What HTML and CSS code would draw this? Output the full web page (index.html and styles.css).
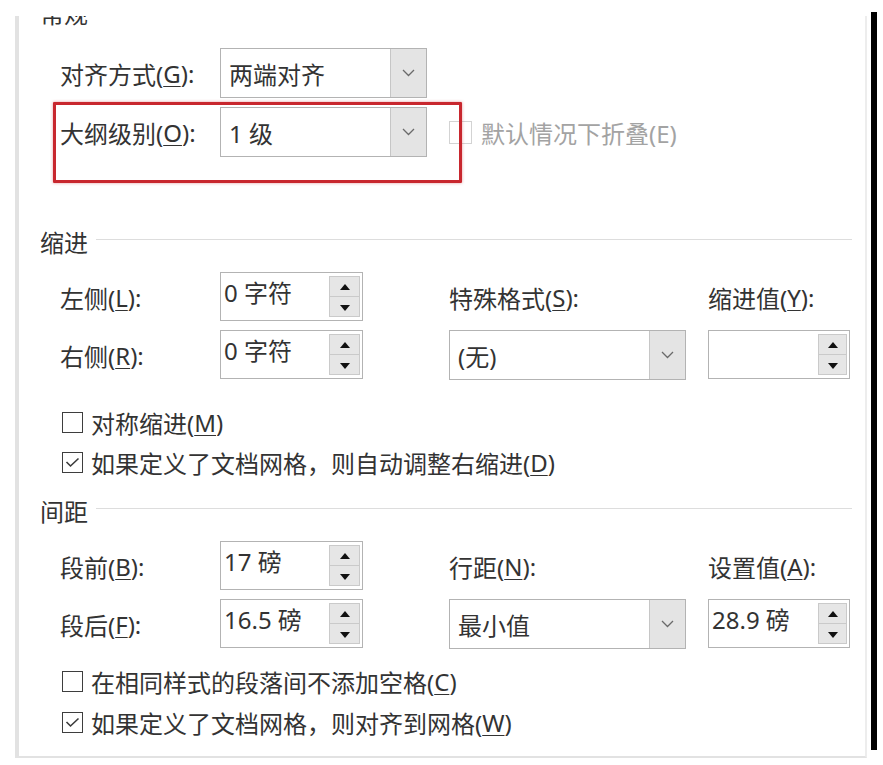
FILE: index.html
```html
<!DOCTYPE html>
<html lang="zh-CN">
<head>
  <meta charset="UTF-8">
  <title>段落 - 缩进和间距</title>
  <link rel="stylesheet" href="styles.css">
</head>
<body>

<div class="screen">
  <div class="panel">
    <div class="highlight-box"></div>

    <div class="group-title cut">常规</div>
    <div class="general">
      <div class="row">
        <span class="label">对齐方式(<u>G</u>):</span>
        <div class="select wide">
          <span class="value">两端对齐</span>
          <span class="arrow"><svg width="13" height="8" viewBox="0 0 13 8"><polyline points="1,1 6.5,6.5 12,1" fill="none" stroke="#6a6a6a" stroke-width="1.3"/></svg></span>
        </div>
      </div>
      <div class="row">
        <span class="label">大纲级别(<u>O</u>):</span>
        <div class="select wide">
          <span class="value">1 级</span>
          <span class="arrow"><svg width="13" height="8" viewBox="0 0 13 8"><polyline points="1,1 6.5,6.5 12,1" fill="none" stroke="#6a6a6a" stroke-width="1.3"/></svg></span>
        </div>
        <div class="check disabled"><span class="box"></span>默认情况下折叠(E)</div>
      </div>
    </div>

    <div class="group-title indent-title">缩进</div>
    <div class="fields">
      <span class="label">左侧(<u>L</u>):</span>
      <div class="spin">
        <span class="value">0 字符</span>
        <span class="buttons"><span class="up"></span><span class="down"></span></span>
      </div>
      <span class="label">特殊格式(<u>S</u>):</span>
      <span class="label">缩进值(<u>Y</u>):</span>

      <span class="label">右侧(<u>R</u>):</span>
      <div class="spin">
        <span class="value">0 字符</span>
        <span class="buttons"><span class="up"></span><span class="down"></span></span>
      </div>
      <div class="select mid">
        <span class="value">(无)</span>
        <span class="arrow"><svg width="13" height="8" viewBox="0 0 13 8"><polyline points="1,1 6.5,6.5 12,1" fill="none" stroke="#6a6a6a" stroke-width="1.3"/></svg></span>
      </div>
      <div class="spin narrow">
        <span class="value"></span>
        <span class="buttons"><span class="up"></span><span class="down"></span></span>
      </div>
    </div>

    <div class="options first">
      <div class="check"><span class="box"></span>对称缩进(<u>M</u>)</div>
      <div class="check"><span class="box checked"><svg width="15" height="11" viewBox="0 0 15 11"><polyline points="1.5,5 5.5,9 13.5,1.5" fill="none" stroke="#3a3a3a" stroke-width="1.6"/></svg></span>如果定义了文档网格，则自动调整右缩进(<u>D</u>)</div>
    </div>

    <div class="group-title spacing-title">间距</div>
    <div class="fields">
      <span class="label">段前(<u>B</u>):</span>
      <div class="spin">
        <span class="value">17 磅</span>
        <span class="buttons"><span class="up"></span><span class="down"></span></span>
      </div>
      <span class="label">行距(<u>N</u>):</span>
      <span class="label">设置值(<u>A</u>):</span>

      <span class="label">段后(<u>F</u>):</span>
      <div class="spin">
        <span class="value">16.5 磅</span>
        <span class="buttons"><span class="up"></span><span class="down"></span></span>
      </div>
      <div class="select mid">
        <span class="value">最小值</span>
        <span class="arrow"><svg width="13" height="8" viewBox="0 0 13 8"><polyline points="1,1 6.5,6.5 12,1" fill="none" stroke="#6a6a6a" stroke-width="1.3"/></svg></span>
      </div>
      <div class="spin narrow">
        <span class="value">28.9 磅</span>
        <span class="buttons"><span class="up"></span><span class="down"></span></span>
      </div>
    </div>

    <div class="options last">
      <div class="check"><span class="box"></span>在相同样式的段落间不添加空格(<u>C</u>)</div>
      <div class="check"><span class="box checked"><svg width="15" height="11" viewBox="0 0 15 11"><polyline points="1.5,5 5.5,9 13.5,1.5" fill="none" stroke="#3a3a3a" stroke-width="1.6"/></svg></span>如果定义了文档网格，则对齐到网格(<u>W</u>)</div>
    </div>
  </div>
  <div class="edge"></div>
</div>

</body>
</html>
```

FILE: styles.css
```css
body {
  margin: 0;
  background: #ffffff;
  color: #333;
  font-family: 'Noto Sans', 'Noto Sans CJK SC', sans-serif;
  font-size: 24px;
  overflow: hidden;
}
.screen {
  display: flex;
  align-items: flex-start;
  padding-left: 15px;
}
.panel {
  position: relative;
  box-sizing: border-box;
  width: 852px;
  height: 742px;
  margin-top: 16px;
  padding: 0 13px 0 21px;
  border-left: 4px solid #e2e2e2;
  border-right: 2px solid #ededed;
  border-bottom: 2px solid #e2e2e2;
  overflow: hidden;
  background: #fff;
}
.edge {
  width: 6px;
  height: 738px;
  margin-top: 12px;
  margin-left: 4px;
  background: #000;
}
.highlight-box {
  position: absolute;
  left: 34px;
  top: 86px;
  width: 409px;
  height: 81px;
  box-sizing: border-box;
  border: 3px solid #c8272e;
  border-radius: 1px;
  box-shadow: 0 0 3px rgba(200, 39, 46, 0.5);
}
u {
  text-decoration-thickness: 1px;
  text-underline-offset: 3px;
}
.group-title {
  display: flex;
  align-items: center;
  height: 30px;
  line-height: 30px;
  gap: 8px;
}
.group-title::after {
  content: '';
  flex: 1;
  border-top: 1px solid #dddddd;
  margin-top: -8px;
}
.group-title.cut::after {
  display: none;
}
.cut {
  margin-top: -17px;
}
.indent-title {
  margin-top: 71px;
}
.spacing-title {
  margin-top: 15px;
}
.general {
  margin-top: 19px;
  padding-left: 20px;
  display: flex;
  flex-direction: column;
  gap: 9px;
}
.row {
  display: flex;
  align-items: center;
  height: 50px;
}
.row .label {
  width: 160px;
}
.label {
  display: flex;
  align-items: center;
  white-space: nowrap;
}
.select {
  box-sizing: border-box;
  height: 50px;
  display: flex;
  border: 1px solid #b3b3b3;
  background: #fff;
}
.select .value {
  flex: 1;
  display: flex;
  align-items: center;
  padding-left: 8px;
}
.select .arrow {
  width: 35px;
  display: flex;
  align-items: center;
  justify-content: center;
  background: #e4e4e4;
  border-left: 1px solid #c6c6c6;
}
.select.wide {
  width: 207px;
}
.select.mid {
  width: 237px;
}
.fields {
  margin-top: 14px;
  padding-left: 20px;
  display: grid;
  grid-template-columns: 160px 229px 259px 142px;
  grid-auto-rows: 50px;
  row-gap: 8px;
}
.spin {
  box-sizing: border-box;
  width: 143px;
  height: 49px;
  display: flex;
  border: 1px solid #b3b3b3;
  background: #fff;
}
.spin.narrow {
  width: 142px;
}
.spin .value {
  flex: 1;
  padding-left: 3px;
  line-height: 40px;
}
.spin .buttons {
  width: 31px;
  margin: 3px 2px 3px 0;
  display: flex;
  flex-direction: column;
}
.spin.narrow .buttons {
  width: 29px;
}
.spin .up,
.spin .down {
  flex: 1;
  position: relative;
  background: #e6e6e6;
  border: 1px solid #cacaca;
}
.spin .down {
  border-top: none;
}
.spin .up::after,
.spin .down::after {
  content: '';
  position: absolute;
  left: 50%;
  top: 50%;
  margin-left: -5px;
  border-left: 5px solid transparent;
  border-right: 5px solid transparent;
}
.spin .up::after {
  margin-top: -3px;
  border-bottom: 6px solid #111;
}
.spin .down::after {
  margin-top: -2px;
  border-top: 6px solid #111;
}
.options {
  padding-left: 22px;
}
.options.first {
  margin-top: 22px;
}
.options.first .check {
  height: 40px;
}
.options.last {
  margin-top: 12px;
}
.options.last .check {
  height: 41px;
}
.check {
  display: flex;
  align-items: center;
  white-space: nowrap;
}
.check .box {
  box-sizing: border-box;
  width: 21px;
  height: 21px;
  margin-right: 8px;
  border: 1.6px solid #3e3e3e;
  display: flex;
  align-items: center;
  justify-content: center;
}
.check.disabled {
  margin-left: 22px;
  color: #a3a3a3;
}
.check.disabled .box {
  width: 23px;
  height: 23px;
  margin-right: 9px;
  border: 1px solid #d3d3d3;
}
```
